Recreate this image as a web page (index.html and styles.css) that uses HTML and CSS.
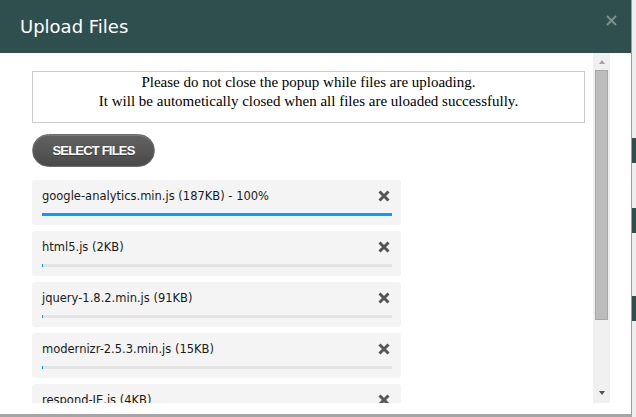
FILE: index.html
```html
<!DOCTYPE html>
<html>
<head>
<meta charset="utf-8">
<link rel="stylesheet" href="styles.css">
</head>
<body>
<div class="page">
  <div class="modal">
    <div class="modal-header">
      <h1 class="title">Upload Files</h1>
      <svg class="close" width="11" height="11" viewBox="0 0 11 11"><path d="M1 1L10 10M10 1L1 10" stroke="currentColor" stroke-width="2" fill="none"/></svg>
    </div>
    <div class="modal-body">
      <div class="scroll-content">
        <div class="notice">Please do not close the popup while files are uploading.<br>It will be autometically closed when all files are uloaded successfully.</div>
        <button class="btn-select">SELECT FILES</button>
        <ul class="file-list">
          <li class="file">
            <div class="file-row"><span class="file-name">google-analytics.min.js (187KB) - 100%</span><svg class="remove" width="12" height="12" viewBox="0 0 12 12"><path d="M1.5 1.5L10.5 10.5M10.5 1.5L1.5 10.5" stroke="currentColor" stroke-width="3" fill="none"/></svg></div>
            <div class="progress"><div class="progress-fill" style="width:100%"></div></div>
          </li>
          <li class="file">
            <div class="file-row"><span class="file-name">html5.js (2KB)</span><svg class="remove" width="12" height="12" viewBox="0 0 12 12"><path d="M1.5 1.5L10.5 10.5M10.5 1.5L1.5 10.5" stroke="currentColor" stroke-width="3" fill="none"/></svg></div>
            <div class="progress"><div class="progress-fill" style="width:1px"></div></div>
          </li>
          <li class="file">
            <div class="file-row"><span class="file-name">jquery-1.8.2.min.js (91KB)</span><svg class="remove" width="12" height="12" viewBox="0 0 12 12"><path d="M1.5 1.5L10.5 10.5M10.5 1.5L1.5 10.5" stroke="currentColor" stroke-width="3" fill="none"/></svg></div>
            <div class="progress"><div class="progress-fill" style="width:1px"></div></div>
          </li>
          <li class="file">
            <div class="file-row"><span class="file-name">modernizr-2.5.3.min.js (15KB)</span><svg class="remove" width="12" height="12" viewBox="0 0 12 12"><path d="M1.5 1.5L10.5 10.5M10.5 1.5L1.5 10.5" stroke="currentColor" stroke-width="3" fill="none"/></svg></div>
            <div class="progress"><div class="progress-fill" style="width:1px"></div></div>
          </li>
          <li class="file">
            <div class="file-row"><span class="file-name">respond-IE.js (4KB)</span><svg class="remove" width="12" height="12" viewBox="0 0 12 12"><path d="M1.5 1.5L10.5 10.5M10.5 1.5L1.5 10.5" stroke="currentColor" stroke-width="3" fill="none"/></svg></div>
            <div class="progress"><div class="progress-fill" style="width:1px"></div></div>
          </li>
        </ul>
      </div>
      <div class="scrollbar">
        <span class="arrow arrow-up"></span>
        <div class="thumb"></div>
        <span class="arrow arrow-down"></span>
      </div>
    </div>
  </div>
  <div class="backdrop-strip">
    <div class="strip-block strip-a"></div>
    <div class="strip-block strip-b"></div>
    <div class="strip-block strip-c"></div>
  </div>
</div>
</body>
</html>
```

FILE: styles.css
```css
html, body {
  margin: 0;
  padding: 0;
  overflow: hidden;
  background: #ffffff;
}

.page {
  display: flex;
  width: 636px;
  height: 417px;
}

.modal {
  width: 632px;
  height: 417px;
  background: #ffffff;
  border-right: 1px solid #9c9c9c;
  border-bottom: 3px solid #a6a6a6;
  box-sizing: border-box;
  display: flex;
  flex-direction: column;
  flex-shrink: 0;
}

.modal-header {
  height: 53px;
  flex-shrink: 0;
  background: #2f4f4f;
  display: flex;
  align-items: center;
  justify-content: space-between;
  padding: 0 14px 0 20px;
}

.title {
  margin: 0;
  font-family: "DejaVu Sans", sans-serif;
  font-weight: normal;
  font-size: 18px;
  color: #ffffff;
  line-height: 21px;
}

.close {
  align-self: flex-start;
  margin-top: 15px;
  color: #7f8e8e;
}

.modal-body {
  height: 350px;
  display: flex;
  padding-right: 21px;
}

.scroll-content {
  flex: 1;
  overflow: hidden;
  padding: 18px 8px 0 32px;
}

.notice {
  border: 1px solid #cccccc;
  padding: 1px 0 11px;
  text-align: center;
  font-family: "Liberation Serif", serif;
  font-size: 15px;
  line-height: 19px;
  color: #000000;
}

.btn-select {
  display: block;
  margin-top: 11px;
  width: 123px;
  height: 33px;
  border-radius: 17px;
  border: 1px solid #6e6e6e;
  background: linear-gradient(#626262, #4a4a4a);
  box-shadow: inset 0 1px 0 rgba(255,255,255,0.15);
  color: #ffffff;
  font-family: "Liberation Sans", Arial, sans-serif;
  font-weight: bold;
  font-size: 13px;
  letter-spacing: -0.8px;
  padding: 0;
  text-shadow: 0 1px 0 rgba(0,0,0,0.3);
}

.file-list {
  list-style: none;
  margin: 13px 0 0;
  padding: 0;
  display: flex;
  flex-direction: column;
  gap: 6px;
  width: 369px;
}

.file {
  background: #f4f4f4;
  border-radius: 3px;
  padding: 8px 9px 9px 10px;
  height: 45px;
  box-sizing: border-box;
  flex-shrink: 0;
}

.file-row {
  display: flex;
  align-items: center;
  justify-content: space-between;
  height: 16px;
}

.file-name {
  font-family: "DejaVu Sans", Verdana, sans-serif;
  font-size: 11.5px;
  line-height: 16px;
  color: #1a1a1a;
}

.remove {
  color: #555555;
  margin-right: 2px;
}

.progress {
  margin-top: 9px;
  height: 3px;
  background: #e3e3e3;
}

.progress-fill {
  height: 3px;
  background: #00a0ff;
}

.scrollbar {
  width: 17px;
  flex-shrink: 0;
  background: #f0f0f0;
  display: flex;
  flex-direction: column;
  align-items: center;
  padding: 7px 0 8px;
  box-sizing: border-box;
}

.arrow {
  width: 0;
  height: 0;
  border-left: 3.5px solid transparent;
  border-right: 3.5px solid transparent;
}

.arrow-up {
  border-bottom: 4px solid #a3a3a3;
}

.arrow-down {
  margin-top: auto;
  border-top: 4px solid #505050;
}

.thumb {
  margin-top: 6px;
  width: 13px;
  height: 250px;
  box-sizing: border-box;
  background: #bcbcbc;
  border: 1px solid #a8a8a8;
}

.backdrop-strip {
  flex: 1;
  background: #eeeeee;
  display: flex;
  flex-direction: column;
}

.strip-block {
  height: 25px;
  background: #2f4f4f;
}

.strip-a { margin-top: 138px; }
.strip-b { margin-top: 45px; }
.strip-c { margin-top: 63px; }
```
